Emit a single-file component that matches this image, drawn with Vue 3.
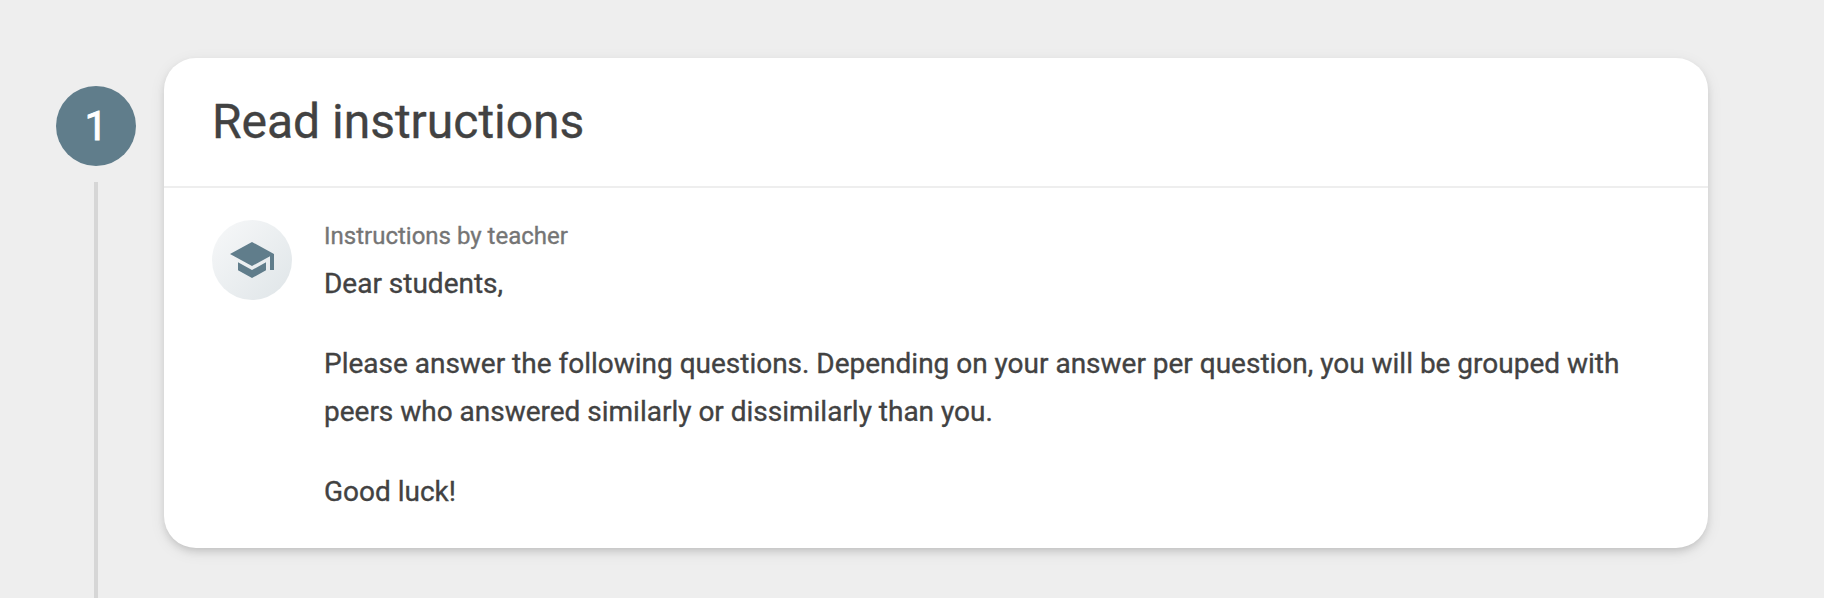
<template>
  <main class="page">
    <div class="step">
      <div class="step-rail">
        <div class="step-number">{{ step.number }}</div>
        <div class="step-line"></div>
      </div>

      <section class="card">
        <header class="card-header">
          <h2 class="title">{{ step.title }}</h2>
        </header>

        <div class="card-body">
          <div class="avatar">
            <svg xmlns="http://www.w3.org/2000/svg" width="48" height="48" viewBox="0 0 24 24" fill="currentColor">
              <path d="M5 13.18v4L12 21l7-3.82v-4L12 17l-7-3.82zM12 3L1 9l11 6 9-4.91V17h2V9L12 3z"></path>
            </svg>
          </div>
          <div class="message">
            <div class="label">Instructions by teacher</div>
            <p v-for="(text, i) in step.paragraphs" :key="i">{{ text }}</p>
          </div>
        </div>
      </section>
    </div>
  </main>
</template>

<script setup>
const step = {
  number: 1,
  title: 'Read instructions',
  paragraphs: [
    'Dear students,',
    'Please answer the following questions. Depending on your answer per question, you will be grouped with peers who answered similarly or dissimilarly than you.',
    'Good luck!',
  ],
};
</script>

<style>
body {
  margin: 0;
  background: #eeeeee;
}
</style>

<style scoped>
.page {
  height: 100vh;
  box-sizing: border-box;
  padding: 58px 116px 0 56px;
  overflow: hidden;
  font-family: Roboto, sans-serif;
  color: #424242;
  -webkit-text-stroke: 0.35px currentColor;
}

.step {
  display: flex;
  align-items: flex-start;
  gap: 28px;
  height: 100%;
}

/* Number and connector line */
.step-rail {
  display: flex;
  flex-direction: column;
  align-items: center;
  gap: 16px;
  flex: 0 0 80px;
  align-self: stretch;
  padding-top: 28px;
}
.step-number {
  display: flex;
  align-items: center;
  justify-content: center;
  width: 80px;
  height: 80px;
  border-radius: 50%;
  background: #607d8b;
  color: white;
  font-size: 40px;
  font-weight: 400;
  -webkit-text-stroke-width: 1px;
}
.step-line {
  flex: 1;
  width: 4px;
  background: #d6d6d6;
}

/* Card */
.card {
  flex: 1;
  min-width: 0;
  background: white;
  border-radius: 32px;
  box-shadow: 0 4px 8px -2px rgba(0, 0, 0, 0.16), 0 4px 16px rgba(0, 0, 0, 0.08);
}
.card-header {
  display: flex;
  align-items: center;
  height: 128px;
  box-sizing: content-box;
  border-bottom: 2px solid #eeeeee;
}
.title {
  margin: 0;
  padding: 0 48px 2px;
  font-size: 48px;
  font-weight: 400;
  letter-spacing: -0.02px;
}
.card-body {
  display: flex;
  gap: 32px;
  padding: 32px 48px;
}
.avatar {
  display: flex;
  align-items: center;
  justify-content: center;
  flex: 0 0 80px;
  height: 80px;
  border-radius: 50%;
  background: linear-gradient(135deg, #f7f8f9, #dfe5e8);
  color: #607d8b;
}
.message { flex: 1; min-width: 0; }
.label {
  margin-bottom: 8px;
  color: #757575;
  font-size: 24px;
  line-height: 32px;
}
.message p {
  margin: 0 0 32px;
  font-size: 28px;
  line-height: 48px;
  letter-spacing: -0.01px;
}
.message p:last-child { margin-bottom: 0; }
</style>
